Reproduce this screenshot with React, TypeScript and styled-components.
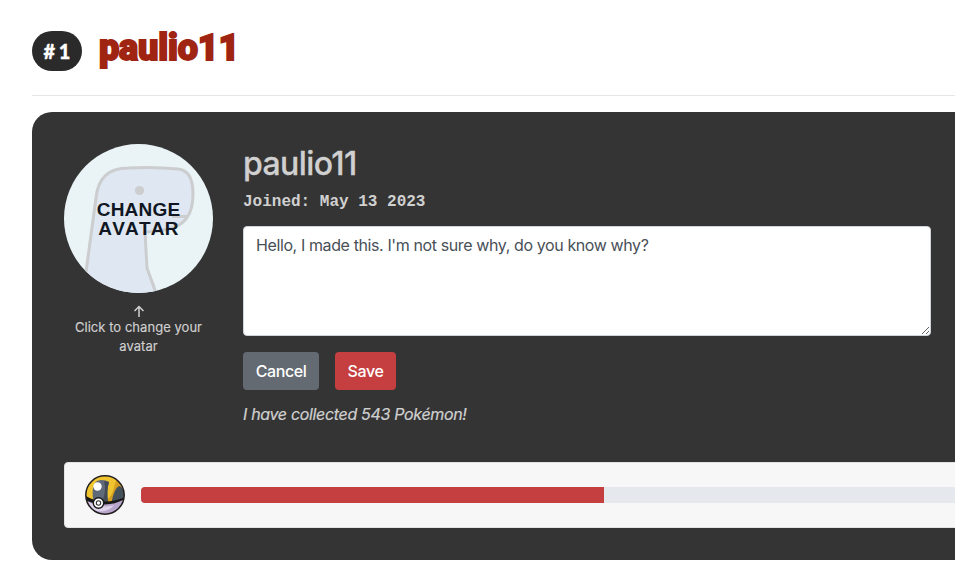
import React from "react";
import styled, { createGlobalStyle } from "styled-components";

const Global = createGlobalStyle`
  * { box-sizing: border-box; }
  html, body { margin: 0; padding: 0; background: #fff; overflow: hidden; }
  body { font-family: Inter, "Liberation Sans", sans-serif; }
`;

const Page = styled.main`
  height: 586px;
  padding: 28px 0 26px 32px;
  overflow: hidden;
`;

const Header = styled.header`
  display: flex;
  align-items: flex-start;
  gap: 17px;
  width: 1110px;
  height: 68px;
  border-bottom: 1px solid #e6e6e6;
`;

const Rank = styled.span`
  display: flex;
  align-items: center;
  justify-content: center;
  width: 50px;
  height: 40px;
  margin-top: 3px;
  border-radius: 20px;
  background: #2a2a2a;
  color: #fff;
  font: 900 20px/39px Lato, sans-serif;
  -webkit-text-stroke: 0.3px #fff;
  word-spacing: -1px;
`;

const Title = styled.h1`
  margin: 0;
  color: #a02412;
  font: 900 36px/40px Roboto, sans-serif;
  letter-spacing: -0.15px;
  -webkit-text-stroke: 1.8px #a02412;
`;

const Card = styled.section`
  width: 1110px;
  height: 448px;
  margin-top: 16px;
  padding: 32px;
  border-radius: 20px;
  background: #343434;
  color: #d0d0d0;
`;

const Profile = styled.div`
  display: flex;
  gap: 30px;
  height: 318px;
`;

const AvatarColumn = styled.div`
  display: flex;
  flex-direction: column;
  align-items: center;
  width: 149px;
`;

const AvatarButton = styled.button`
  display: grid;
  width: 149px;
  height: 149px;
  padding: 0;
  border: 0;
  border-radius: 50%;
  overflow: hidden;
  background: #eaf4f7;
  place-items: center;

  > * { grid-area: 1 / 1; }
`;

const AvatarLabel = styled.span`
  z-index: 1;
  color: #101722;
  font: bold 19px/19px "Liberation Sans", Arial, sans-serif;
  font-kerning: none;
  letter-spacing: 0.2px;
`;

const Arrow = styled.svg`
  margin-top: 12px;
  flex: none;
`;

const Hint = styled.p`
  margin: 0;
  font-size: 13px;
  line-height: 19px;
  letter-spacing: 0.04px;
  text-align: center;
  -webkit-text-stroke: 0.15px #d0d0d0;
`;

const Details = styled.div`
  width: 688px;
`;

const Name = styled.h2`
  margin: 0;
  padding-top: 1px;
  font-size: 32px;
  font-weight: 500;
  line-height: 38px;
  letter-spacing: -0.6px;
  -webkit-text-stroke: 0.3px #d0d0d0;
`;

const Joined = styled.p`
  margin: 9px 0 14px;
  height: 20px;
  font: bold 16px/20px "Liberation Mono", "Courier New", monospace;
`;

const Bio = styled.textarea`
  display: block;
  width: 688px;
  height: 110px;
  padding: 6px 12px;
  border: 1px solid #ced4da;
  border-radius: 4px;
  background: #fff;
  color: #495057;
  font: 400 16px/24px Inter, sans-serif;
  letter-spacing: -0.39px;
  outline: none;
  resize: both;
`;

const Actions = styled.div`
  display: flex;
  gap: 16px;
  margin-top: 16px;
`;

const Button = styled.button<{ $tone: string; $width: number }>`
  width: ${(p) => p.$width}px;
  height: 38px;
  padding: 0;
  border: 0;
  border-radius: 4px;
  background: ${(p) => p.$tone};
  color: #fff;
  font: 500 16px/38px Inter, sans-serif;
  letter-spacing: -0.4px;
`;

const Collected = styled.p`
  margin: 12px 0 0;
  font-size: 16px;
  line-height: 24px;
  font-style: italic;
  letter-spacing: -0.33px;
  -webkit-text-stroke: 0.2px #d0d0d0;
`;

const ProgressCard = styled.div`
  display: flex;
  align-items: center;
  gap: 16px;
  height: 66px;
  padding: 0 20px;
  border: 1px solid #e2e2e2;
  border-radius: 4px;
  background: #f7f7f7;
`;

const Track = styled.div`
  flex: 1;
  height: 16px;
  border-radius: 4px;
  overflow: hidden;
  background: #e5e9ed;
`;

const Fill = styled.div`
  width: 463px;
  height: 100%;
  background: #c53f41;
`;

const BirdAvatar = () => (
  <svg width="149" height="149" viewBox="0 0 149 149" fill="none" aria-hidden="true">
    <path
      d="M20 149L22 126L32 54C34 34 44 24 64 24C83 23 104 24 114 25C126 26 129 38 129 50C129 77 116 87 81 88L83 124L91 140L93 149Z"
      fill="#dfe7f3"
    />
    <path
      d="M22 128L32 54C34 34 44 24 64 24C83 23 104 24 114 25C126 26 129 38 129 50C129 77 116 87 81 88L83 124L92 149M108 72.500H124"
      stroke="#cbcdce"
      strokeWidth="3"
      strokeLinejoin="round"
    />
    <circle cx="75.500" cy="46.500" r="4.600" fill="#cbcdce" />
  </svg>
);

const Ball = () => (
  <svg width="40" height="40" viewBox="0 0 40 40" aria-hidden="true">
    <defs>
      <clipPath id="ball"><circle cx="20" cy="20" r="19" /></clipPath>
    </defs>
    <g clipPath="url(#ball)">
      <path d="M0 0H40V40H0Z" fill="#efc42f" />
      <path d="M32 3C39 9 42 21 34 30L20 26C26 22 28 18 29 12Z" fill="#d39e22" />
      <path d="M8 24C7 15 8 9 12 6C16 4 21 5 24 7C22 14 22 20 23 27L14 28Z" fill="#606977" />
      <path d="M19 6L24 7C22 13 22 20 23 27L17 27C20 20 21 13 19 6Z" fill="#424b55" />
      <path d="M27 25C29 16 32 11 35 11L40 16V30H27Z" fill="#43515a" />
      <path d="M0 22C7 26 23 31 40 23V40H0Z" fill="#b7a5cc" />
      <path d="M3 27C12 31 20 33 29 30C25 36 15 38 8 35Z" fill="#ddd2e9" />
      <path d="M0 20C7 26 23 30 40 22V24C28 31 14 31 0 25Z" fill="#171717" />
      <circle cx="12.500" cy="11.500" r="4.200" fill="#fff" />
    </g>
    <circle cx="20" cy="20" r="19.200" fill="none" stroke="#211d1c" strokeWidth="1.500" />
    <circle cx="13.500" cy="28" r="5.200" fill="#fff" stroke="#171717" strokeWidth="1.400" />
    <circle cx="13.500" cy="28" r="2.200" fill="#fff" stroke="#333" strokeWidth="1.100" />
  </svg>
);

export default function App() {
  return (
    <>
      <Global />
      <Page>
        <Header>
          <Rank># 1</Rank>
          <Title>paulio11</Title>
        </Header>
        <Card>
          <Profile>
            <AvatarColumn>
              <AvatarButton>
                <BirdAvatar />
                <AvatarLabel>CHANGE<br />AVATAR</AvatarLabel>
              </AvatarButton>
              <Arrow width="12" height="13" viewBox="0 0 12 13" fill="none" stroke="#d0d0d0" strokeWidth="1.500">
                <path d="M6 12V1.500M1.500 6L6 1.500L10.500 6" />
              </Arrow>
              <Hint>Click to change your<br />avatar</Hint>
            </AvatarColumn>
            <Details>
              <Name>paulio11</Name>
              <Joined>Joined: May 13 2023</Joined>
              <Bio spellCheck={false} defaultValue="Hello, I made this. I'm not sure why, do you know why?" />
              <Actions>
                <Button $tone="#636a72" $width={76}>Cancel</Button>
                <Button $tone="#c53f41" $width={61}>Save</Button>
              </Actions>
              <Collected>I have collected 543 Pokémon!</Collected>
            </Details>
          </Profile>
          <ProgressCard>
            <Ball />
            <Track><Fill /></Track>
          </ProgressCard>
        </Card>
      </Page>
    </>
  );
}
